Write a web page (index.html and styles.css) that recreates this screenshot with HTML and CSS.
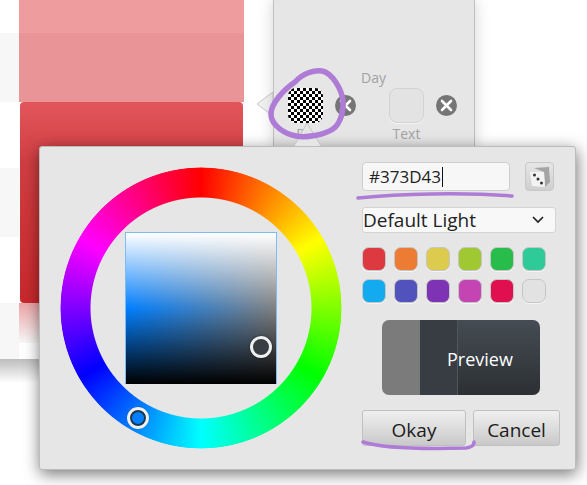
FILE: index.html
```html
<!DOCTYPE html>
<html lang="en">
<head>
    <meta charset="UTF-8">
    <title>Color picker</title>
    <link rel="stylesheet" href="styles.css">
</head>
<body>
    <div class="stage">
        <!-- window behind the dialog -->
        <div class="backdrop">
            <div class="strip strip-a"></div>
            <div class="strip strip-b"></div>
            <div class="pink pink-a"></div>
            <div class="pink pink-b"></div>
            <div class="red-card"></div>
            <div class="red-fade"></div>
            <div class="side-gap"></div>
            <div class="window-edge"></div>
        </div>

        <svg class="left-arrow" width="18" height="28" viewBox="0 0 18 28">
            <path d="M17 1 L1 13 L17 25 Z" fill="#f2f2f2" stroke="#c9c9c9" stroke-width="1"/>
        </svg>

        <div class="panel">
            <div class="day-label">Day</div>
            <div class="chips">
                <div class="chip-group">
                    <div class="chip checker"></div>
                    <div class="chip-label first">P</div>
                </div>
                <div class="close"><svg width="21" height="21" viewBox="0 0 21 21"><path d="M6 6 L15 15 M15 6 L6 15" stroke="#fff" stroke-width="2.6" stroke-linecap="round"/></svg></div>
                <div class="chip-group second">
                    <div class="chip blank"></div>
                    <div class="chip-label">Text</div>
                </div>
                <div class="close"><svg width="21" height="21" viewBox="0 0 21 21"><path d="M6 6 L15 15 M15 6 L6 15" stroke="#fff" stroke-width="2.6" stroke-linecap="round"/></svg></div>
            </div>
        </div>

        <div class="dialog">
            <div class="wheel-box">
                <div class="wheel"></div>
                <div class="square"></div>
                <div class="handle handle-sv"></div>
                <div class="handle handle-hue"></div>
            </div>
            <div class="controls">
                <div class="hex-row">
                    <div class="hex-input">#373D43<span class="caret"></span></div>
                    <div class="dice">
                        <svg width="24" height="24" viewBox="0 0 24 24">
                            <path d="M6 3 L21 2 L22 17 L17 22 L16 7 Z" fill="#a4a4a4"/>
                            <path d="M2 7 L16 7 L17 22 L4 21 Z" fill="#f3f3f3"/>
                            <circle cx="6.5" cy="10" r="1.5" fill="#333"/>
                            <circle cx="10" cy="14" r="1.5" fill="#333"/>
                            <circle cx="13.5" cy="18" r="1.5" fill="#333"/>
                        </svg>
                    </div>
                </div>
                <div class="theme-select">
                    <span>Default Light</span>
                    <svg width="12" height="8" viewBox="0 0 12 8"><path d="M1 1 L6 6 L11 1" fill="none" stroke="#222" stroke-width="1.7"/></svg>
                </div>
                <div class="swatches">
                    <div class="swatch" style="background:#dc3a40"></div>
                    <div class="swatch" style="background:#ec7c34"></div>
                    <div class="swatch" style="background:#dccb4c"></div>
                    <div class="swatch" style="background:#a0c832"></div>
                    <div class="swatch" style="background:#28bc4a"></div>
                    <div class="swatch" style="background:#2ecb98"></div>
                    <div class="swatch" style="background:#14aaf0"></div>
                    <div class="swatch" style="background:#5252bc"></div>
                    <div class="swatch" style="background:#7e32b4"></div>
                    <div class="swatch" style="background:#c444b4"></div>
                    <div class="swatch" style="background:#e01050"></div>
                    <div class="swatch" style="background:#e2e2e2"></div>
                </div>
                <div class="preview">
                    <div class="preview-old"></div>
                    <div class="preview-flat"></div>
                    <div class="preview-main"></div>
                    <span class="preview-text">Preview</span>
                </div>
                <div class="buttons">
                    <div class="btn btn-okay">Okay</div>
                    <div class="btn btn-cancel">Cancel</div>
                </div>
            </div>
        </div>

        <svg class="marks" width="587" height="485" viewBox="0 0 587 485">
            <path class="tip" d="M294 146 L307 123 L321 146"/>
            <path class="ink" d="M295 82 C303 73 314 70 322 71 C332 73 341 88 343 100 C344 112 340 124 333 129 C324 135 306 138 296 136 C285 134 272 126 271 115 C270 105 283 90 295 82"/>
            <path class="ink thin" d="M358 198 C400 194 460 192 512 196"/>
            <path class="ink thin" d="M363 442 C385 449 430 449 466 448 C471 447 474 446 474 442"/>
        </svg>
    </div>
</body>
</html>
```

FILE: styles.css
```css
* {
    margin: 0;
    padding: 0;
    box-sizing: border-box;
}

body {
    font-family: "Open Sans", "Noto Sans", sans-serif;
    background: white;
}

.stage {
    position: relative;
    width: 587px;
    height: 485px;
    overflow: hidden;
    background: white;
}

/* background window */
.backdrop div {
    position: absolute;
}

.strip {
    left: 0;
    width: 19px;
    background: #f7f7f7;
}

.strip-a {
    top: 33px;
    height: 69px;
}

.strip-b {
    top: 168px;
    height: 69px;
}

.pink {
    left: 19px;
    width: 225px;
}

.pink-a {
    top: 0;
    height: 33px;
    background: #ee9c9e;
}

.pink-b {
    top: 33px;
    height: 69px;
    background: #e99597;
}

.red-card {
    left: 20px;
    top: 102px;
    width: 223px;
    height: 201px;
    border-radius: 4px;
    background: linear-gradient(#e2565b 0%, #d03e42 30%, #c8282c 100%);
}

.red-fade {
    left: 19px;
    top: 303px;
    width: 225px;
    height: 40px;
    background: linear-gradient(#eba4a6, #f7f7f7);
}

.side-gap {
    left: 0;
    top: 303px;
    width: 19px;
    height: 56px;
    background: #f7f7f7;
}

.window-edge {
    left: 0;
    top: 359px;
    width: 60px;
    height: 24px;
    background: linear-gradient(#bdbdbd, #ffffff);
}

.left-arrow {
    position: absolute;
    left: 256px;
    top: 91px;
}

/* side panel with the chips */
.panel {
    position: absolute;
    left: 273px;
    top: 0;
    width: 202px;
    height: 147px;
    padding-top: 68px;
    background: #e6e6e6;
    border-left: 1px solid #bfbfbf;
    border-right: 1px solid #bfbfbf;
    box-shadow: 0 0 14px rgba(0,0,0,0.18);
    overflow: hidden;
}

.day-label {
    height: 19px;
    padding-left: 87px;
    font-size: 14px;
    line-height: 19px;
    color: #a2a2a2;
}

.chips {
    display: flex;
    padding-left: 14px;
    margin-top: 1px;
}

.chip-group {
    width: 35px;
    display: flex;
    flex-direction: column;
    align-items: center;
}

.chip-group.second {
    margin-left: 33px;
}

.chip {
    width: 35px;
    height: 35px;
    border-radius: 8px;
}

.checker {
    background: conic-gradient(#000 25%, #fff 0 50%, #000 0 75%, #fff 0) 0 0 / 6px 6px;
}

.blank {
    background: #e3e3e3;
    border: 1px solid #d2d2d2;
    box-shadow: 0 1px 0 #f5f5f5;
}

.chip-label {
    margin-top: 1px;
    font-size: 14px;
    line-height: 19px;
    color: #a2a2a2;
}

.chip-label.first {
    margin-right: 10px;
}

.close {
    width: 21px;
    height: 21px;
    margin: 7px 0 0 12px;
    border-radius: 50%;
    background: #757575;
}

/* colour dialog */
.dialog {
    position: absolute;
    left: 39px;
    top: 146px;
    width: 537px;
    height: 324px;
    padding: 20px 0 0 20px;
    display: flex;
    background: #e6e6e6;
    border: 1px solid #bcbcbc;
    border-radius: 3px;
    box-shadow: 1px 4px 16px rgba(0,0,0,0.55);
}

.wheel-box {
    position: relative;
    width: 282px;
    height: 282px;
    flex: none;
}

.wheel {
    width: 282px;
    height: 282px;
    border-radius: 50%;
    background: conic-gradient(#f00, #ff0, #0f0, #0ff, #00f, #f0f, #f00);
    -webkit-mask: radial-gradient(circle, transparent 110px, #000 111px, #000 140px, transparent 141px);
    mask: radial-gradient(circle, transparent 110px, #000 111px, #000 140px, transparent 141px);
}

.square {
    position: absolute;
    left: 65px;
    top: 65px;
    width: 152px;
    height: 152px;
    background:
        linear-gradient(#fff, rgba(255,255,255,0) 50%, rgba(0,0,0,0) 50%, #000),
        linear-gradient(to right, #007fff, #808080);
    border: 1px solid #7cbcf6;
    border-bottom: none;
}

.handle {
    position: absolute;
    width: 22px;
    height: 22px;
    border-radius: 50%;
    border: 3px solid #f0f0f0;
}

.handle-sv {
    left: 190px;
    top: 169px;
    background: #373d43;
    box-shadow: 0 0 2px rgba(0,0,0,0.6);
}

.handle-hue {
    left: 67px;
    top: 240px;
    background: #0080ff;
    box-shadow: inset 0 0 0 2px #223344, 0 0 1px rgba(0,0,0,0.5);
}

.controls {
    width: 198px;
    margin-left: 20px;
    margin-top: -5px;
    flex: none;
}

.hex-row {
    display: flex;
    gap: 15px;
}

.hex-input {
    width: 148px;
    height: 29px;
    padding-left: 6px;
    font-size: 17px;
    line-height: 28px;
    color: #222;
    background: #f7f7f7;
    border: 1px solid #cfcfcf;
    border-radius: 4px;
}

.caret {
    display: inline-block;
    width: 1px;
    height: 20px;
    margin-left: 1px;
    vertical-align: -4px;
    background: #111;
}

.dice {
    width: 29px;
    height: 29px;
    display: flex;
    align-items: center;
    justify-content: center;
    background: linear-gradient(#e6e6e6, #cfcfcf);
    border: 1px solid #c8c8c8;
    border-radius: 4px;
}

.theme-select {
    width: 194px;
    height: 26px;
    margin-top: 16px;
    padding: 0 11px 0 0;
    display: flex;
    align-items: center;
    justify-content: space-between;
    font-size: 19px;
    color: #222;
    background: #f8f8f8;
    border: 1px solid #d4d4d4;
    border-radius: 3px;
}

.swatches {
    display: grid;
    grid-template-columns: repeat(6, 24px);
    gap: 8px;
    margin-top: 14px;
}

.swatch {
    height: 24px;
    border-radius: 7px;
    border: 1px solid #c6c6c6;
    box-shadow: 0 1px 0 #f4f4f4;
}

.preview {
    position: relative;
    display: flex;
    width: 158px;
    height: 75px;
    margin: 17px 0 0 20px;
    border-radius: 7px;
    overflow: hidden;
}

.preview-old {
    width: 38px;
    background: #7b7b7b;
}

.preview-flat {
    width: 37px;
    background: #373d43;
}

.preview-main {
    flex: 1;
    background: linear-gradient(#454c53, #2c3034);
    border-left: 1px solid #50565c;
}

.preview-text {
    position: absolute;
    left: 65px;
    top: 26px;
    font-size: 18px;
    line-height: 26px;
    color: white;
}

.buttons {
    display: flex;
    gap: 7px;
    margin-top: 15px;
}

.btn {
    height: 36px;
    font-size: 19px;
    line-height: 38px;
    text-align: center;
    color: #1c1c1c;
    background: linear-gradient(#f0f0f0, #c9c9c9);
    border: 1px solid #c0c0c0;
    border-radius: 3px;
}

.btn-okay {
    width: 104px;
}

.btn-cancel {
    width: 87px;
}

/* hand-drawn marks over the screenshot */
.marks {
    position: absolute;
    left: 0;
    top: 0;
}

.tip {
    fill: #e6e6e6;
    stroke: #c4c4c4;
    stroke-width: 1;
}

.ink {
    fill: none;
    stroke: #ae7bd6;
    stroke-width: 5.5;
    stroke-linecap: round;
}

.ink.thin {
    stroke-width: 3.5;
}
```
